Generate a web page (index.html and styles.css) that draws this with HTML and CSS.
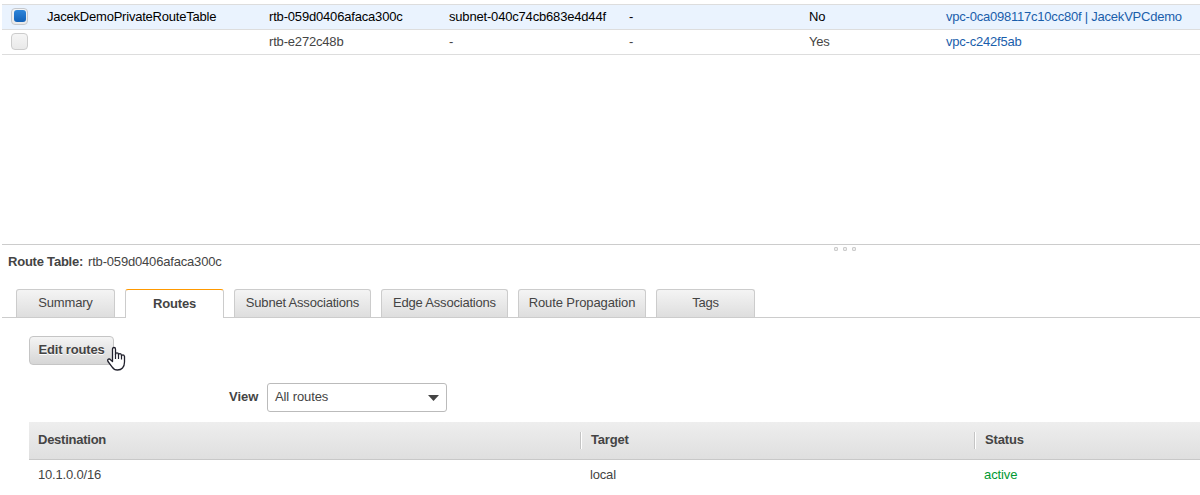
FILE: index.html
```html
<!DOCTYPE html>
<html lang="en">
<head>
<meta charset="utf-8">
<title>Route Tables</title>
<link rel="stylesheet" href="styles.css">
</head>
<body>
<main class="console">
  <section class="tables">
    <div class="row selected">
      <span class="check-cell"><span class="checkbox checked"></span></span>
      <span class="name">JacekDemoPrivateRouteTable</span>
      <span>rtb-059d0406afaca300c</span>
      <span class="subnet">subnet-040c74cb683e4d44f</span>
      <span>-</span>
      <span>No</span>
      <a class="vpc">vpc-0ca098117c10cc80f | JacekVPCdemo</a>
    </div>
    <div class="row">
      <span class="check-cell"><span class="checkbox"></span></span>
      <span></span>
      <span>rtb-e272c48b</span>
      <span>-</span>
      <span>-</span>
      <span>Yes</span>
      <a>vpc-c242f5ab</a>
    </div>
  </section>
  <section class="details">
    <div class="grip"><i></i><i></i><i></i></div>
    <div class="title"><b>Route Table:</b><span>rtb-059d0406afaca300c</span></div>
    <nav class="tabs">
      <span class="tab summary">Summary</span>
      <span class="tab active">Routes</span>
      <span class="tab subnets">Subnet Associations</span>
      <span class="tab edges">Edge Associations</span>
      <span class="tab propagation">Route Propagation</span>
      <span class="tab tags">Tags</span>
    </nav>
    <div class="toolbar">
      <button class="edit">Edit routes</button>
      <svg class="pointer" width="20" height="26" viewBox="0 0 20 26">
        <path d="M5.5 15.5V3.2Q5.5 1.5 7 1.5T8.5 3.2V8.5Q8.5 6.8 10 6.8T11.5 8.5V9Q11.6 7.7 12.9 7.7T14.5 9.3V10Q14.7 8.9 15.9 8.9T17.5 10.5V16Q17.5 20 15.5 22Q13.8 24 10.5 24Q7 24 5 20.8L1 15.5Q.2 13.8 1.4 13.2T3.5 13.7L5.5 15.5Z" fill="#fff" stroke="#20202c" stroke-width="1.3" stroke-linejoin="round"/>
        <path d="M8.5 8V13M11.5 8.5V13M14.5 9.5V13.5" fill="none" stroke="#20202c" stroke-width="1.2"/>
      </svg>
    </div>
    <div class="filter">
      <b>View</b>
      <div class="select"><span>All routes</span><svg width="11" height="6" viewBox="0 0 11 6"><path d="M0 0H11L5.5 6Z" fill="#444"/></svg></div>
    </div>
    <div class="routes">
      <div class="head"><b>Destination</b><b class="split">Target</b><b class="split">Status</b></div>
      <div class="route"><span>10.1.0.0/16</span><span>local</span><span class="ok">active</span></div>
    </div>
  </section>
</main>
</body>
</html>
```
FILE: styles.css
```css
* { box-sizing: border-box; }
body { margin: 0; background: #fff; color: #444; font: 13px/15px "Liberation Sans", Arial, sans-serif; letter-spacing: -.18px; }
.console { height: 495px; overflow: hidden; padding: 4px 0 0 2px; white-space: nowrap; }
.tables { height: 240px; border-top: 1px solid #ddd; }
.row { display: grid; grid-template-columns: 45px 222px 180px 180px 180px 137px 1fr; height: 25px; padding-bottom: 1px; align-items: center; border-bottom: 1px solid #ddd; }
.selected { background: #eaf3fe; color: #000; }
.row a { color: #1a5eab; letter-spacing: -.22px; }
.name { letter-spacing: -.22px; }
.check-cell { display: flex; padding-left: 9px; }
.checkbox { width: 17px; height: 17px; border: 1px solid #ccc; border-radius: 4px; background: linear-gradient(#f5f5f5, #e9e9e9); }
.checked { padding: 1px 2px; border-color: #c5c8cc; }
.checked::before { content: ""; display: block; width: 12px; height: 12px; border-radius: 3px; background: linear-gradient(#2f86da, #1261b8); }
.details { border-top: 1px solid #ccc; }
.grip { display: flex; gap: 5px; height: 8px; padding: 2px 0 0 832px; }
.grip i { width: 4px; height: 4px; border: 1px solid #ccc; border-radius: 1px; background: #eee; }
.title { display: flex; gap: 5px; height: 36px; padding: 1px 0 0 6px; }
.title b { width: 75px; letter-spacing: -.22px; }
.tabs { display: flex; gap: 10px; height: 29px; padding-left: 14px; border-bottom: 1px solid #ccc; }
.tab { width: 99px; height: 28px; padding-top: 5px; text-align: center; border: 1px solid #ccc; border-bottom: 0; border-radius: 3px 3px 0 0; background: linear-gradient(#f4f4f4, #dedede); }
.tab.active { height: 29px; padding-top: 6px; font-weight: bold; background: #fff; border-top-color: #f90; }
.tab.subnets { width: 137px; letter-spacing: -.2px; }
.tab.edges { width: 127px; letter-spacing: -.2px; }
.tab.propagation { width: 128px; letter-spacing: -.1px; }
.toolbar { position: relative; height: 65px; padding: 18px 0 0 27px; }
.edit { display: block; width: 85px; height: 29px; padding: 0 0 2px; border: 1px solid #c5c5c5; border-radius: 4px; background: linear-gradient(#f4f4f4, #d6d6d6); color: #444; font: bold 13px/15px "Liberation Sans", Arial, sans-serif; letter-spacing: -.17px; text-shadow: 0 1px #fff; }
.pointer { position: absolute; left: 105px; top: 28px; }
.filter { display: flex; align-items: center; height: 29px; padding-left: 227px; }
.filter b { width: 38px; padding-bottom: 2px; letter-spacing: 0; }
.select { display: flex; align-items: center; justify-content: space-between; width: 180px; height: 29px; padding: 0 7px; border: 1px solid #bbb; border-radius: 3px; }
.select span { padding-bottom: 2px; letter-spacing: -.1px; }
.select svg { margin-top: 1px; }
.routes { padding: 10px 0 0 27px; }
.head, .route { display: grid; grid-template-columns: 543px 394px 1fr; padding-left: 9px; }
.head { height: 38px; padding-top: 10px; border-bottom: 1px solid #c8c8c8; background: linear-gradient(#eee, #dfdfdf); letter-spacing: -.25px; }
.split { height: 17px; margin-left: -1px; padding-left: 10px; border-left: 1px solid #c4c4c4; box-shadow: inset 1px 0 #fff; letter-spacing: -.17px; }
.route { height: 36px; padding-top: 7px; }
.route span + span { padding-left: 9px; }
.route .ok { color: #093; letter-spacing: -.1px; }
```
